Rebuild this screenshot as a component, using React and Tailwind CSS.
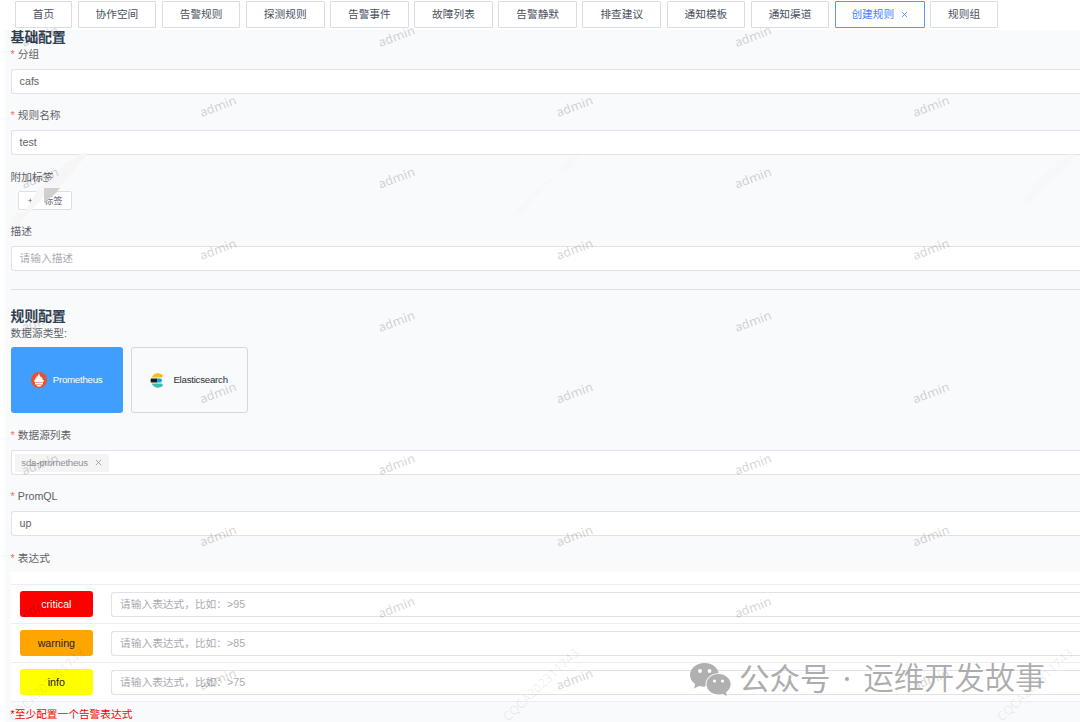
import React from 'react';

const tabs = ['协作空间', '告警规则', '探测规则', '告警事件', '故障列表', '告警静默', '排查建议', '通知模板', '通知渠道'];

const adminRows = [36, 106, 177.5, 249, 321, 392.5, 464, 535.5, 607, 679];

const severities = [
  { name: 'critical', style: 'bg-[#ff0000] text-white', hint: '请输入表达式，比如：>95' },
  { name: 'warning', style: 'bg-[#ffa500] text-[#222]', hint: '请输入表达式，比如：>85' },
  { name: 'info', style: 'bg-[#ffff00] text-[#222]', hint: '请输入表达式，比如：>75' },
];

function Tab({ children, width = 'w-[78.8px]' }) {
  return (
    <div className={`flex h-[26.5px] shrink-0 items-center justify-center rounded-[1px] border border-[#d8dce5] bg-white text-[#495060] ${width}`}>
      {children}
    </div>
  );
}

function Label({ children, required, className = '' }) {
  return (
    <div className={`flex h-4 items-center text-[#606266] ${className}`}>
      {required && <span className="mr-[3px] text-[#f56c6c]">*</span>}
      {children}
    </div>
  );
}

function Field({ children, className = '' }) {
  return (
    <div className={`flex h-[25px] items-center rounded-l-[3px] border border-r-0 border-[#dfe2e8] bg-white pl-2 text-[#606266] ${className}`}>
      {children}
    </div>
  );
}

function Close({ className }) {
  return (
    <svg viewBox="0 0 8 8" className={className} fill="none" stroke="currentColor" strokeWidth="0.9">
      <path d="M1 1l6 6M7 1L1 7" />
    </svg>
  );
}

function PrometheusLogo() {
  return (
    <svg viewBox="0 0 32 32" className="h-4 w-4">
      <circle cx="16" cy="16" r="16" fill="#e6522c" />
      <path
        fill="#fff"
        d="M16 29.5c-2.7 0-4.8-1.5-4.8-3.4h9.6c0 1.9-2.1 3.4-4.8 3.4zM8 24.9v-2.9h16v2.9zM8.2 20.9C6.700 19 6 17.400 5.800 16l3.100.700c-.8-1.700-1-3.200-.6-5.400.9 1.300 2 1.700 2.600 1.900-.4-2.200.2-5 1.300-6.500.2 1.500.8 2.100 1.500 3.100.2-2.600 1-5.400 2.400-7.300 0 1.800.5 3 1.500 4.600 1 1.700 1.400 3 1.300 4.600.7-.8 1.100-2 .9-3.500 1.500 2.100 2 3.800 1.600 5.400.9-.5 1.600-1.300 2-2.300.4 2.100.3 3.700-.5 5.400l3.300-.7c-.2 1.500-1 3.200-2.400 4.900z"
      />
    </svg>
  );
}

function ElasticLogo() {
  return (
    <svg viewBox="0 0 30 32" className="h-[15px] w-[14px]">
      <path d="M3.500 9.500C6 3.800 11 .5 17 .5c4.600 0 8.600 2 11.300 5.300L25 9.500z" fill="#f0bf1a" />
      <path d="M1.800 11.800H16v8.400H1.800a16 16 0 0 1 0-8.400z" fill="#1d1d1b" />
      <path d="M16 11.800h5.500a4.200 4.200 0 0 1 0 8.400H16z" fill="#07a5de" />
      <path d="M3.500 22.500H25l3.300 3.700c-2.700 3.300-6.700 5.300-11.300 5.300-6 0-11-3.300-13.500-9z" fill="#3ebeb0" />
    </svg>
  );
}

function SerialMark({ x }) {
  return (
    <text transform={`translate(${x} 688) rotate(-43.500)`} textAnchor="middle" fontSize="12.700" fill="#000" fillOpacity="0.08" fontFamily="Noto Sans">
      CQCA202311743
    </text>
  );
}

function Watermarks() {
  return (
    <svg className="pointer-events-none absolute inset-0 h-full w-full" viewBox="0 0 1080 722">
      <g fill="#f6f6f6">
        <path d="M13 226l-1-8 5-5 7-1 8-12 6-12 14-9 14-16 11-6 4-4h7l-28 34-17 11-18 19-6 9z" />
        <path d="M508 219l28-29 22-18 11-17 11 1-8 12-14 6-38 40z" opacity=".55" />
        <path d="M1021 202l18-22 26-25 10-3-4 12-43 40z" opacity=".5" />
      </g>
      <path d="M44 188h16l-5 6-11 9z" fill="#cfcfcf" />
      <g fill="#000" fillOpacity="0.17" fontSize="12.600" fontWeight="500" fontFamily="Noto Sans" textAnchor="middle">
        {adminRows.flatMap((y, row) =>
          (row % 2 === 0 ? [40, 396.5, 753] : [218, 574.5, 931]).map((x) => (
            <text key={`${x}-${y}`} transform={`translate(${x + 1.5} ${y + 4.5}) rotate(-21)`}>
              admin
            </text>
          ))
        )}
      </g>
      {[50, 544, 1038].map((x) => (
        <SerialMark key={x} x={x} />
      ))}
    </svg>
  );
}

function AccountBadge() {
  return (
    <div className="pointer-events-none absolute top-[658px] left-[690px] flex h-[42px] items-center whitespace-nowrap text-[#adadad]">
      <svg viewBox="0 0 41 34" className="h-[34px] w-[41px] shrink-0">
        <path fill="#b0b0b0" d="M14.500 1C6.500 1 0 6.300 0 13c0 3.800 2 7 5.200 9.200L4 26.500l5-2.600c1.800.5 3.600.8 5.500.8L29 12C28 5.500 22 1 14.500 1z" />
        <ellipse cx="28.500" cy="22.500" rx="13" ry="11.300" fill="#fff" />
        <path fill="#b0b0b0" d="M28.500 12C21.800 12 16.500 16.600 16.500 22.300S21.800 32.600 28.500 32.600c1.500 0 2.900-.2 4.200-.6l4.300 2-1.100-3.700c2.900-1.900 4.700-4.800 4.700-8C40.600 16.600 35.200 12 28.500 12z" />
        <g fill="#fff">
          <circle cx="10" cy="9" r="1.900" />
          <circle cx="19.500" cy="9" r="1.900" />
          <circle cx="24.500" cy="19" r="1.600" />
          <circle cx="32.500" cy="19" r="1.600" />
        </g>
      </svg>
      <span className="ml-[8px] text-[30.5px]">公众号</span>
      <span className="flex w-[33px] justify-center"><span className="h-1 w-1 rounded-full bg-[#aaa]" /></span>
      <span className="text-[30.3px] font-[350]">运维开发故事</span>
    </div>
  );
}

export default function App() {
  return (
    <div className="relative flex h-[722px] w-[1080px] flex-col overflow-hidden bg-white font-['Liberation_Sans','Noto_Sans_CJK_SC',sans-serif] text-[10.7px] leading-4">
      <nav className="flex h-[30px] shrink-0 gap-[5.350px] pt-[1px] pl-[14.600px]">
        <Tab width="w-[57.6px]">首页</Tab>
        {tabs.map((tab) => (
          <Tab key={tab}>{tab}</Tab>
        ))}
        <div className="flex h-[26.5px] w-[90px] shrink-0 items-center justify-center rounded-[1px] border border-[#5b93f5] bg-white text-[#4080ff]">
          创建规则
          <Close className="ml-[7px] h-[7px] w-[7px]" />
        </div>
        <Tab width="w-[68px]">规则组</Tab>
      </nav>

      <main className="ml-[5px] flex flex-1 flex-col bg-[#f8fafc] pl-[5.600px]">
        <h2 className="flex h-4 items-center text-[13.8px] font-bold text-[#303e51]">基础配置</h2>
        <Label required>分组</Label>
        <Field className="mt-[7px] pb-[2px]">cafs</Field>
        <Label required className="mt-[13px]">规则名称</Label>
        <Field className="mt-[7px] pb-[2px]">test</Field>
        <Label className="mt-[14px]">附加标签</Label>
        <div className="mt-[6px] ml-[7px] flex h-[19px] w-[54px] items-center rounded-[2px] border border-[#dcdfe6] bg-white pl-[9px] text-[9.3px] text-[#606266]">
          <span>+</span>
          <span className="ml-[11px]">标签</span>
        </div>
        <Label className="mt-[13px]">描述</Label>
        <Field className="mt-[7px] pb-[1px]">
          <span className="text-[#a8abb2]">请输入描述</span>
        </Field>
        <hr className="mt-[18px] border-[#dcdfe6]" />

        <h2 className="mt-[19px] flex h-4 items-center text-[13.8px] font-bold text-[#303e51]">规则配置</h2>
        <Label>数据源类型:</Label>
        <div className="mt-[6px] flex h-[66px] shrink-0 gap-2 text-[9.7px] tracking-[-0.25px]">
          <div className="flex w-[112px] items-center justify-center gap-[6px] rounded-[3px] bg-[#409eff] text-white">
            <PrometheusLogo />
            Prometheus
          </div>
          <div className="flex w-[117px] items-center justify-center gap-[9px] rounded-[3px] border border-[#d4d7dd] text-[#303133]">
            <ElasticLogo />
            Elasticsearch
          </div>
        </div>
        <Label required className="mt-[14px]">数据源列表</Label>
        <Field className="mt-[7px]">
          <div className="-ml-[5px] flex h-[18px] w-[94px] items-center justify-center rounded-[2px] bg-[#f4f4f5] text-[9.7px] tracking-[-0.25px] text-[#909399]">
            sda-prometheus
            <Close className="ml-[7px] h-[7px] w-[7px]" />
          </div>
        </Field>
        <Label required className="mt-[13px]">PromQL</Label>
        <Field className="mt-[7px] pb-[1px]">up</Field>
        <Label required className="mt-[14px]">表达式</Label>

        <div className="mt-[6px] flex h-[129px] shrink-0 flex-col bg-white pt-3">
          {severities.map((severity) => (
            <div key={severity.name} className="flex h-[39px] items-center border-t border-[#ebeef5] pl-[9px]">
              <div className={`flex h-[26px] w-[73.5px] items-center justify-center rounded-[3px] ${severity.style}`}>
                {severity.name}
              </div>
              <Field className="ml-[18px] flex-1">
                <span className="text-[#a8abb2]">{severity.hint}</span>
              </Field>
            </div>
          ))}
        </div>
        <div className="flex h-[20px] items-center border-t border-[#ebeef5] pt-[4px] text-[#ff0000]">*至少配置一个告警表达式</div>
      </main>

      <Watermarks />
      <AccountBadge />
    </div>
  );
}
